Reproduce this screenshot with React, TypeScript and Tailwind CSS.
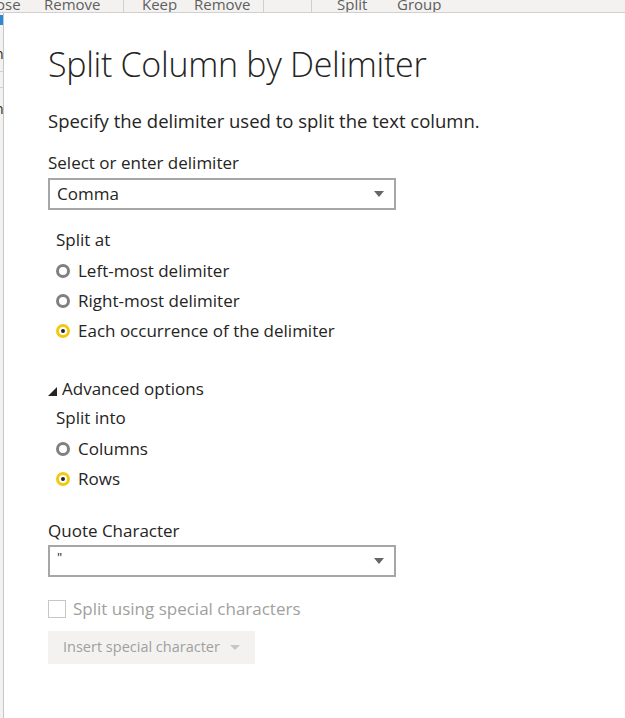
import React from "react";

const font = { fontFamily: '"Open Sans", "Noto Sans", "Liberation Sans", sans-serif' };

function Radio({ checked, label }: { checked?: boolean; label: string }) {
  return (
    <div className="flex items-center h-[30px]">
      <span className="w-[22px] flex items-center">
        {checked ? (
          <span className="w-[14px] h-[14px] rounded-full border-[3px] border-[#f2c811] flex items-center justify-center">
            <span className="w-[4px] h-[4px] rounded-full bg-[#252423]" />
          </span>
        ) : (
          <span className="w-[14px] h-[14px] rounded-full border-[3px] border-[#808080]" />
        )}
      </span>
      <span className="text-[17px] text-[#252423]">{label}</span>
    </div>
  );
}

function Select({ value, small }: { value: string; small?: boolean }) {
  return (
    <div className="w-[348px] h-[32px] border-2 border-[#a6a6a6] flex items-center justify-between pl-[7px] pr-[10px]">
      <span className={small ? "text-[13px] text-[#252423] -mt-[6px]" : "text-[17px] text-[#252423]"}>{value}</span>
      <svg width="10" height="6" viewBox="0 0 10 6">
        <path d="M0 0 L10 0 L5 6 Z" fill="#666" />
      </svg>
    </div>
  );
}

export default function App() {
  return (
    <div className="w-[625px] h-[718px] overflow-hidden bg-white relative flex flex-col" style={font}>
      <div className="h-[13px] bg-[#f3f2f1] border-b border-[#d2d0ce] overflow-hidden shrink-0">
        <div className="flex items-end h-[12px] text-[15px] text-[#605e5c] leading-none">
          <span className="w-[48px] -ml-[4px] shrink-0">ose</span>
          <span className="w-[79px] shrink-0">Remove</span>
          <span className="w-[19px] h-[12px] border-l border-[#d2d0ce] shrink-0" />
          <span className="w-[52px] shrink-0">Keep</span>
          <span className="w-[69px] shrink-0">Remove</span>
          <span className="w-[48px] h-[12px] border-l border-[#d2d0ce] shrink-0" />
          <span className="w-[26px] h-[12px] border-l border-[#d2d0ce] shrink-0" />
          <span className="w-[60px] shrink-0">Split</span>
          <span className="w-[58px] shrink-0">Group</span>
        </div>
      </div>
      <div className="flex flex-1">
        <div className="w-[3px] bg-[#f3f2f1] shrink-0 flex flex-col overflow-hidden text-[14px] leading-none text-[#252423]">
          <div className="h-[10px] mt-[2px] w-[3px] bg-[#2b88d8]" />
          <div className="mt-[22px] -ml-[5px]">n</div>
          <div className="mt-[10px] h-px bg-[#d2d0ce]" />
          <div className="mt-[15px] h-px bg-[#d2d0ce]" />
          <div className="mt-[14px] -ml-[5px]">n</div>
        </div>
        <div className="flex-1 border-l border-[#c8c6c4] pl-[44px] pt-[29px]">
          <h1 className="text-[34px] font-light text-[#252423] leading-[44px] tracking-[-0.3px]">Split Column by Delimiter</h1>
          <p className="mt-[22px] text-[18.5px] text-[#252423] leading-[26px]">Specify the delimiter used to split the text column.</p>
          <p className="mt-[18px] text-[17px] text-[#252423] leading-[22px]">Select or enter delimiter</p>
          <div className="mt-[4px]"><Select value="Comma" /></div>
          <div className="pl-[8px] mt-[17px]">
            <p className="text-[17px] text-[#252423] leading-[26px]">Split at</p>
            <div className="mt-[3px]">
              <Radio label="Left-most delimiter" />
              <Radio label="Right-most delimiter" />
              <Radio checked label="Each occurrence of the delimiter" />
            </div>
          </div>
          <div className="mt-[30px] flex items-center">
            <svg width="9" height="9" viewBox="0 0 9 9" className="mr-[5px] mt-[4px]">
              <path d="M9 0 L9 9 L0 9 Z" fill="#252423" />
            </svg>
            <span className="text-[17px] text-[#252423] leading-[26px]">Advanced options</span>
          </div>
          <div className="pl-[8px] mt-[3px]">
            <p className="text-[17px] text-[#252423] leading-[26px]">Split into</p>
            <div className="mt-[3px]">
              <Radio label="Columns" />
              <Radio checked label="Rows" />
            </div>
          </div>
          <p className="mt-[24px] text-[17px] text-[#252423] leading-[26px]">Quote Character</p>
          <div className="mt-[1px]"><Select value={'"'} small /></div>
          <div className="mt-[19px] flex items-center">
            <span className="w-[18px] h-[18px] border border-[#c8c6c4] bg-white mr-[7px]" />
            <span className="text-[17px] text-[#a19f9d]">Split using special characters</span>
          </div>
          <div className="mt-[9px] w-[207px] h-[33px] bg-[#f3f2f1] flex items-center pl-[15px] gap-[10px]">
            <span className="text-[14.5px] text-[#a19f9d]">Insert special character</span>
            <svg width="10" height="5" viewBox="0 0 10 5">
              <path d="M0 0 L10 0 L5 5 Z" fill="#c8c6c4" />
            </svg>
          </div>
        </div>
      </div>
    </div>
  );
}
